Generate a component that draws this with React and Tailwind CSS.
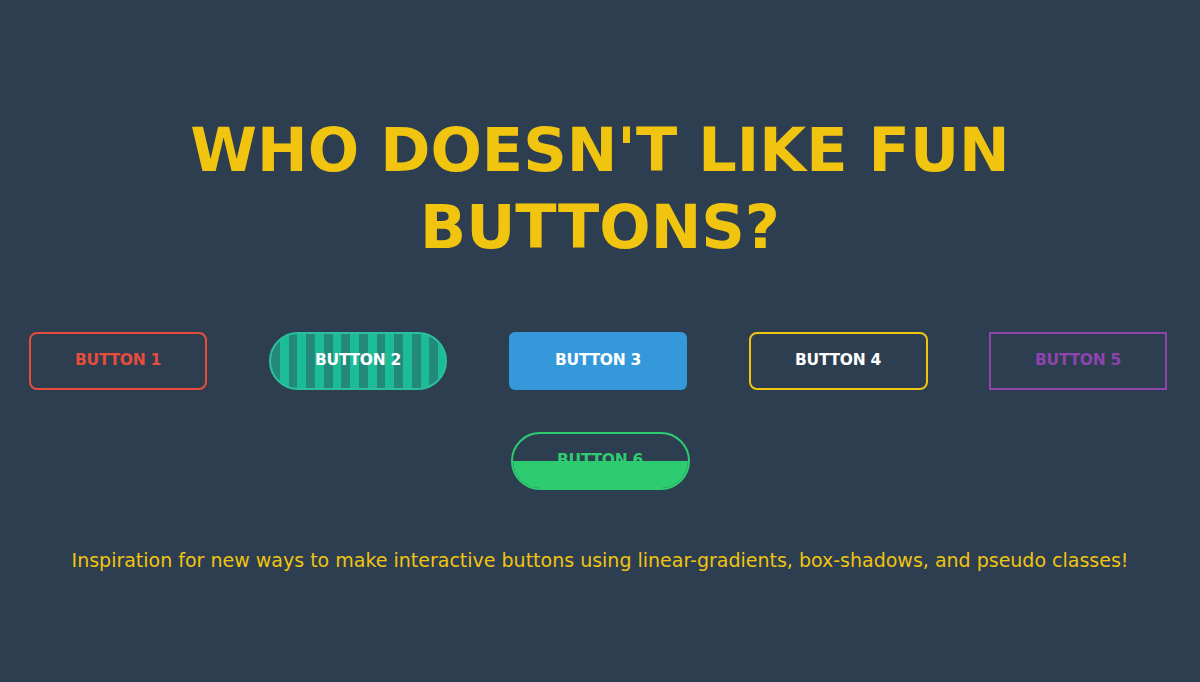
export default function App() {
  const base =
    "relative flex h-[58px] w-[178px] items-center justify-center overflow-hidden text-[15.5px] font-bold uppercase tracking-[-0.3px]"

  return (
    <div className="min-h-screen w-full overflow-hidden bg-[#2c3e50] pt-[112px] font-['DejaVu_Sans',sans-serif]">
      <h1 className="text-center text-[60.5px] font-bold leading-[77px] text-[#f1c40f]">
        WHO DOESN'T LIKE FUN
        <br />
        BUTTONS?
      </h1>

      <div className="-ml-[2px] mt-[66px] grid w-[1200px] grid-cols-5">
        <div className="flex justify-center">
          <button className={`${base} w-[174px] rounded-lg border-2 border-[#e74c3c] text-[#e74c3c]`}>
            Button 1
          </button>
        </div>
        <div className="flex justify-center">
          {/* striped pill */}
          <button
            className={`${base} rounded-full border-2 border-[#2bbf9f] bg-[repeating-linear-gradient(90deg,#238a7b_0px,#238a7b_8.8px,#1dbc98_8.8px,#1dbc98_17.6px)] text-white`}
          >
            Button 2
          </button>
        </div>
        <div className="flex justify-center">
          <button className={`${base} rounded-md bg-[#3498db] text-white`}>
            Button 3
          </button>
        </div>
        <div className="flex justify-center">
          <button className={`${base} w-[179px] rounded-lg border-2 border-[#f1c40f] text-white`}>
            Button 4
          </button>
        </div>
        <div className="flex justify-center">
          <button className={`${base} w-[177px] border-2 border-[#8e44ad] text-[#8e44ad]`}>
            Button 5
          </button>
        </div>
      </div>

      <div className="mt-[42px] flex justify-center">
        <button className={`${base} w-[179px] rounded-full border-2 border-[#2ecc71] text-[#2ecc71]`}>
          Button 6
          {/* fill rising from the bottom, drawn over the label */}
          <span className="absolute inset-x-0 bottom-0 h-1/2 bg-[#2ecc71]" />
        </button>
      </div>

      <p className="mt-[56px] text-center text-[19px] text-[#f1c40f]">
        Inspiration for new ways to make interactive buttons using linear-gradients, box-shadows, and pseudo classes!
      </p>
    </div>
  )
}
